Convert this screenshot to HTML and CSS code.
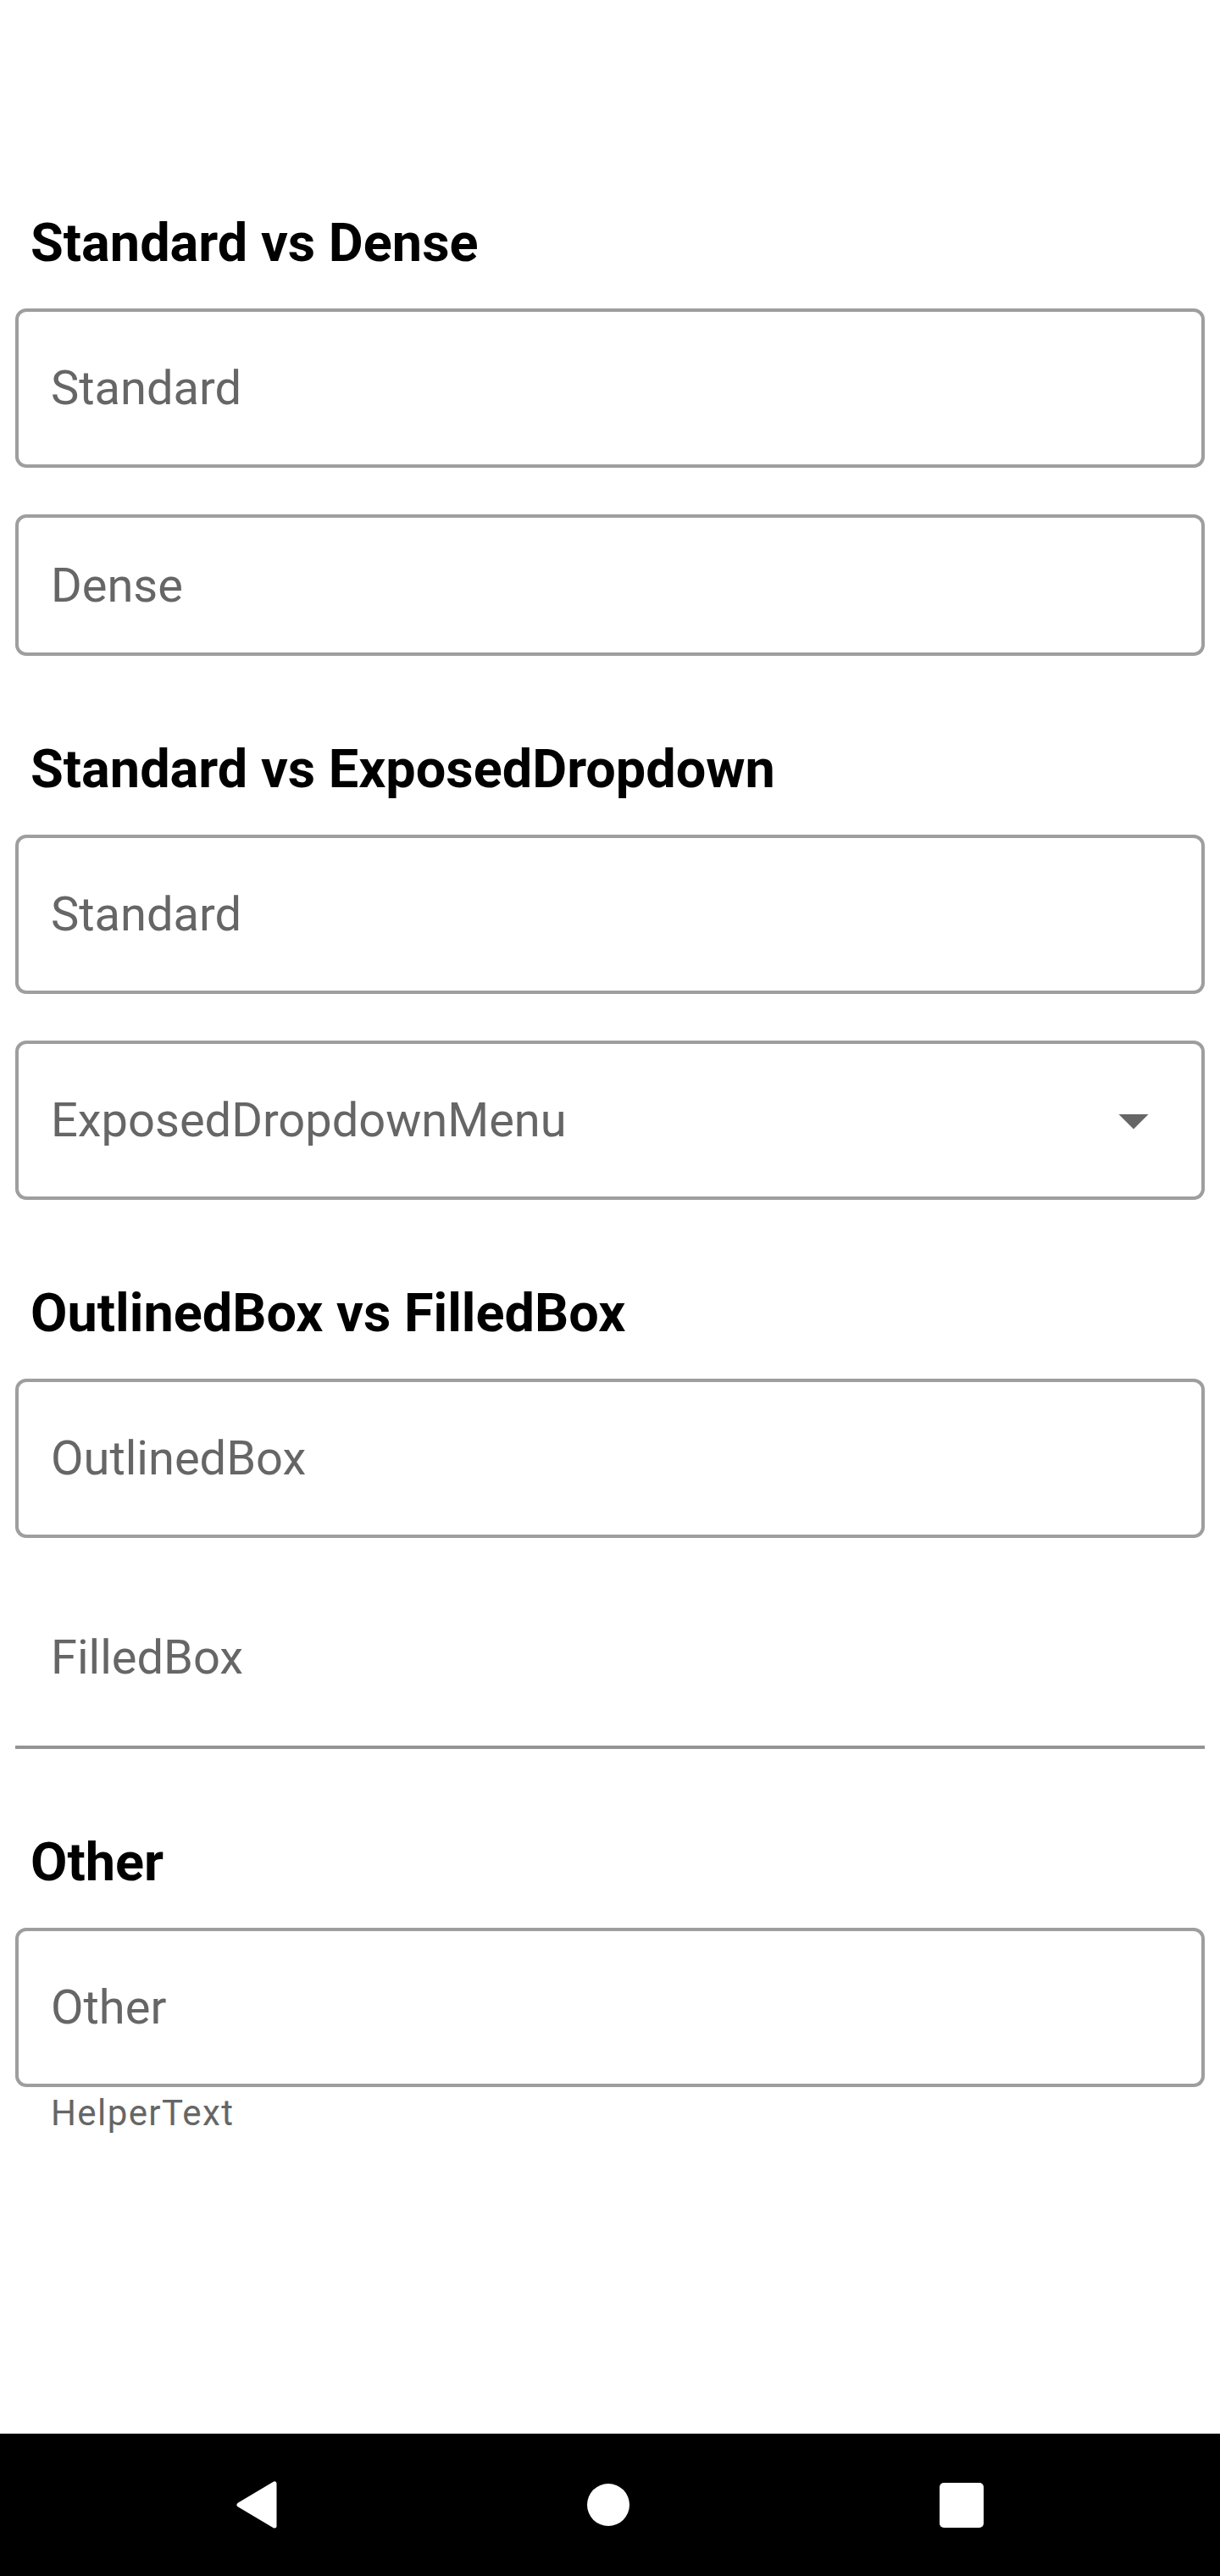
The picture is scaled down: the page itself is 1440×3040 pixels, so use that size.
FILE: index.html
```html
<!DOCTYPE html>
<html lang="en">
<head>
<meta charset="utf-8">
<title>TextField variants</title>
<link rel="stylesheet" href="styles.css">
</head>
<body>
<div class="screen">
  <main class="content">
    <h2 class="section-title first">Standard vs Dense</h2>
    <div class="field outlined"><span class="placeholder">Standard</span></div>
    <div class="field outlined dense gap"><span class="placeholder">Dense</span></div>

    <h2 class="section-title">Standard vs ExposedDropdown</h2>
    <div class="field outlined"><span class="placeholder">Standard</span></div>
    <div class="field outlined gap dropdown">
      <span class="placeholder">ExposedDropdownMenu</span>
      <svg class="drop-icon" viewBox="0 0 24 24" width="84" height="84"><path d="M7 10l5 5 5-5z" fill="#666666"/></svg>
    </div>

    <h2 class="section-title">OutlinedBox vs FilledBox</h2>
    <div class="field outlined"><span class="placeholder">OutlinedBox</span></div>
    <div class="field filled gap"><span class="placeholder">FilledBox</span></div>

    <h2 class="section-title">Other</h2>
    <div class="field outlined"><span class="placeholder">Other</span></div>
    <div class="helper">HelperText</div>
  </main>
  <nav class="navbar">
    <svg class="nav-back" viewBox="0 0 48 56" width="48" height="56"><polygon points="45,3 45,53 3,28" fill="#ffffff" stroke="#ffffff" stroke-width="5" stroke-linejoin="round"/></svg>
    <span class="nav-home"></span>
    <span class="nav-recent"></span>
  </nav>
</div>
</body>
</html>
```
FILE: styles.css
```css
html, body {
  margin: 0;
  padding: 0;
  background: #ffffff;
}
body {
  font-family: Roboto, "Noto Sans", "Liberation Sans", sans-serif;
}
.screen {
  width: 1440px;
  height: 3040px;
  display: flex;
  flex-direction: column;
}
.content {
  flex: 1;
  padding: 0 18px;
}
.section-title {
  margin: 97px 0 40px;
  padding-left: 18px;
  font-size: 63px;
  line-height: 74px;
  font-weight: 700;
  color: #000000;
}
.section-title.first {
  margin-top: 250px;
}
.field {
  box-sizing: border-box;
  display: flex;
  align-items: center;
  padding: 0 38px;
}
.field.gap {
  margin-top: 55px;
}
.outlined {
  height: 188px;
  border: 4px solid #9e9e9e;
  border-radius: 13px;
}
.outlined.dense {
  height: 167px;
}
.dropdown {
  justify-content: space-between;
  padding-right: 38px;
}
.drop-icon {
  display: block;
  flex: none;
}
.field.filled {
  height: 195px;
  align-items: flex-start;
  padding: 54px 42px 0;
  border-bottom: 4px solid #949494;
  margin-top: 54px;
}
.placeholder {
  font-size: 56px;
  color: #666666;
  line-height: normal;
}
.helper {
  margin-top: 6px;
  padding-left: 42px;
  font-size: 42px;
  letter-spacing: 1.4px;
  line-height: normal;
  color: #666666;
}
.navbar {
  height: 168px;
  flex: none;
  background: #000000;
  display: flex;
  align-items: center;
  justify-content: center;
  gap: 366px;
}
.nav-back {
  display: block;
}
.nav-home {
  width: 50px;
  height: 50px;
  border-radius: 50%;
  background: #ffffff;
}
.nav-recent {
  width: 52px;
  height: 53px;
  border-radius: 5px;
  background: #ffffff;
}
```
